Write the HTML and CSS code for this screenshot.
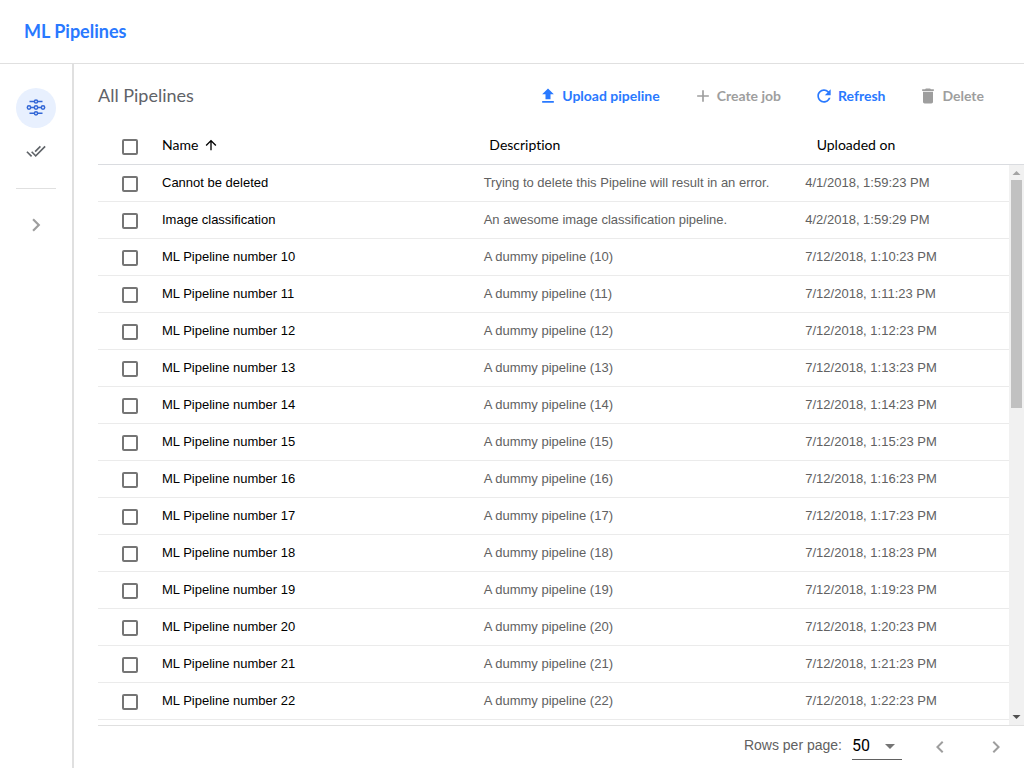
FILE: index.html
```html
<!DOCTYPE html>
<html lang="en">
<head>
<meta charset="utf-8">
<title>ML Pipelines</title>
<link rel="stylesheet" href="styles.css">
</head>
<body>
<header class="topbar"><h1 class="brand">ML Pipelines</h1></header>
<div class="layout">
  <nav class="sidebar" aria-label="Main">
    <a class="nav-item active" href="#pipelines" aria-label="Pipelines">
      <svg width="20" height="20" viewBox="0 0 20 20" fill="none" stroke="currentColor" stroke-width="1.5">
        <path d="M3.500 3.500H8M12 3.500h4.500M5 9.500h3M12 9.500h3M3.500 15.300H8M12 15.300h4.500"/>
        <circle cx="10" cy="3.500" r="1.600"/><circle cx="3" cy="9.500" r="1.700"/><circle cx="10" cy="9.500" r="1.700"/><circle cx="17" cy="9.500" r="1.700"/><circle cx="10" cy="15.300" r="1.600"/>
      </svg>
    </a>
    <a class="nav-item" href="#jobs" aria-label="Jobs">
      <svg width="20" height="20" viewBox="0 1 24 24" fill="currentColor"><path d="M18 7l-1.410-1.410-6.340 6.340 1.410 1.410L18 7zm4.240-1.410L11.660 16.170 7.480 12l-1.410 1.410L11.660 19l12-12-1.420-1.410zM.41 13.410L6 19l1.410-1.410L1.830 12 .41 13.410z"/></svg>
    </a>
    <hr class="divider">
    <button class="expand" type="button" aria-label="Expand"><svg width="26" height="26" viewBox="0 0 24 24" fill="currentColor"><path d="M10 6L8.590 7.410 13.170 12l-4.580 4.590L10 18l6-6z"/></svg></button>
  </nav>
  <main class="content">
    <div class="toolbar">
      <h2 class="page-title">All Pipelines</h2>
      <div class="actions">
        <button class="action" type="button"><svg width="20" height="20" viewBox="0 0 24 24" fill="currentColor"><path d="M9 16h6v-6h4l-7-7-7 7h4zm-4 2h14v2H5z"/></svg>Upload pipeline</button>
        <button class="action" type="button" disabled><svg width="20" height="20" viewBox="0 0 24 24" fill="currentColor"><path d="M19 13h-6v6h-2v-6H5v-2h6V5h2v6h6v2z"/></svg>Create job</button>
        <button class="action" type="button"><svg width="20" height="20" viewBox="0 0 24 24" fill="currentColor"><path d="M17.650 6.350C16.200 4.900 14.210 4 12 4c-4.420 0-7.990 3.580-7.990 8s3.570 8 7.990 8c3.730 0 6.840-2.550 7.730-6h-2.080c-.82 2.330-3.040 4-5.650 4-3.310 0-6-2.690-6-6s2.690-6 6-6c1.660 0 3.140.69 4.220 1.780L13 11h7V4l-2.350 2.350z"/></svg>Refresh</button>
        <button class="action" type="button" disabled><svg width="20" height="20" viewBox="0 0 24 24" fill="currentColor"><path d="M6 19c0 1.100.9 2 2 2h8c1.100 0 2-.9 2-2V7H6v12zM19 4h-3.500l-1-1h-5l-1 1H5v2h14V4z"/></svg>Delete</button>
      </div>
    </div>
    <table class="grid">
      <thead><tr class="row head"><th><input type="checkbox" aria-label="Select all"></th><th>Name <svg width="16" height="16" viewBox="0 0 24 24" fill="currentColor"><path d="M4 12l1.410 1.410L11 7.830V20h2V7.830l5.580 5.590L20 12l-8-8-8 8z"/></svg></th><th>Description</th><th>Uploaded on</th></tr></thead>
      <tbody class="rows">
        <tr class="row"><td><input type="checkbox" aria-label="Select Cannot be deleted"></td><td>Cannot be deleted</td><td>Trying to delete this Pipeline will result in an error.</td><td>4/1/2018, 1:59:23 PM</td></tr>
        <tr class="row"><td><input type="checkbox" aria-label="Select Image classification"></td><td>Image classification</td><td>An awesome image classification pipeline.</td><td>4/2/2018, 1:59:29 PM</td></tr>
        <tr class="row"><td><input type="checkbox" aria-label="Select 10"></td><td>ML Pipeline number 10</td><td>A dummy pipeline (10)</td><td>7/12/2018, 1:10:23 PM</td></tr>
        <tr class="row"><td><input type="checkbox" aria-label="Select 11"></td><td>ML Pipeline number 11</td><td>A dummy pipeline (11)</td><td>7/12/2018, 1:11:23 PM</td></tr>
        <tr class="row"><td><input type="checkbox" aria-label="Select 12"></td><td>ML Pipeline number 12</td><td>A dummy pipeline (12)</td><td>7/12/2018, 1:12:23 PM</td></tr>
        <tr class="row"><td><input type="checkbox" aria-label="Select 13"></td><td>ML Pipeline number 13</td><td>A dummy pipeline (13)</td><td>7/12/2018, 1:13:23 PM</td></tr>
        <tr class="row"><td><input type="checkbox" aria-label="Select 14"></td><td>ML Pipeline number 14</td><td>A dummy pipeline (14)</td><td>7/12/2018, 1:14:23 PM</td></tr>
        <tr class="row"><td><input type="checkbox" aria-label="Select 15"></td><td>ML Pipeline number 15</td><td>A dummy pipeline (15)</td><td>7/12/2018, 1:15:23 PM</td></tr>
        <tr class="row"><td><input type="checkbox" aria-label="Select 16"></td><td>ML Pipeline number 16</td><td>A dummy pipeline (16)</td><td>7/12/2018, 1:16:23 PM</td></tr>
        <tr class="row"><td><input type="checkbox" aria-label="Select 17"></td><td>ML Pipeline number 17</td><td>A dummy pipeline (17)</td><td>7/12/2018, 1:17:23 PM</td></tr>
        <tr class="row"><td><input type="checkbox" aria-label="Select 18"></td><td>ML Pipeline number 18</td><td>A dummy pipeline (18)</td><td>7/12/2018, 1:18:23 PM</td></tr>
        <tr class="row"><td><input type="checkbox" aria-label="Select 19"></td><td>ML Pipeline number 19</td><td>A dummy pipeline (19)</td><td>7/12/2018, 1:19:23 PM</td></tr>
        <tr class="row"><td><input type="checkbox" aria-label="Select 20"></td><td>ML Pipeline number 20</td><td>A dummy pipeline (20)</td><td>7/12/2018, 1:20:23 PM</td></tr>
        <tr class="row"><td><input type="checkbox" aria-label="Select 21"></td><td>ML Pipeline number 21</td><td>A dummy pipeline (21)</td><td>7/12/2018, 1:21:23 PM</td></tr>
        <tr class="row"><td><input type="checkbox" aria-label="Select 22"></td><td>ML Pipeline number 22</td><td>A dummy pipeline (22)</td><td>7/12/2018, 1:22:23 PM</td></tr>
      </tbody>
    </table>
    <div class="scrollbar" aria-hidden="true">
      <svg class="arrow up" width="15" height="15" viewBox="0 0 15 15" fill="currentColor"><path d="M3.500 10l4-4 4 4z"/></svg>
      <div class="track"><div class="thumb"></div></div>
      <svg class="arrow down" width="15" height="15" viewBox="0 0 15 15" fill="currentColor"><path d="M3.500 5l4 4 4-4z"/></svg>
    </div>
    <footer class="pager">
      <label for="page-size">Rows per page:</label>
      <span class="select-box">
        <select id="page-size"><option>50</option></select>
        <svg width="24" height="24" viewBox="0 0 24 24" fill="currentColor"><path d="M7 10l5 5 5-5z"/></svg>
      </span>
      <button class="page" type="button" aria-label="Previous page" disabled><svg width="24" height="24" viewBox="0 0 24 24" fill="currentColor"><path d="M15.410 7.410L14 6l-6 6 6 6 1.410-1.410L10.830 12z"/></svg></button>
      <button class="page" type="button" aria-label="Next page"><svg width="24" height="24" viewBox="0 0 24 24" fill="currentColor"><path d="M10 6L8.590 7.410 13.170 12l-4.580 4.590L10 18l6-6z"/></svg></button>
    </footer>
  </main>
</div>
</body>
</html>
```
FILE: styles.css
```css
* { box-sizing: border-box; }
body {
  margin: 0;
  height: 100vh;
  display: flex;
  flex-direction: column;
  background: #fff;
  color: #000;
  font: 13px/16px "Liberation Sans", Arial, sans-serif;
}
svg { display: block; flex: none; }
button {
  display: flex;
  align-items: center;
  justify-content: center;
  padding: 0;
  border: 0;
  background: none;
  font: inherit;
  color: #9e9e9e;
}
.topbar {
  flex: none;
  height: 64px;
  padding: 0 24px 2px;
  display: flex;
  align-items: center;
  border-bottom: 1px solid #e0e0e0;
}
.brand { margin: 0; font: 700 18px/24px Lato, sans-serif; color: #2979ff; }
.layout { flex: 1; min-height: 0; display: flex; }
.sidebar {
  flex: none;
  width: 74px;
  padding: 24px 16px;
  border-right: 2px solid #e0e0e0;
  display: flex;
  flex-direction: column;
}
.nav-item {
  display: flex;
  align-items: center;
  justify-content: center;
  width: 40px;
  height: 40px;
  margin-bottom: 4px;
  border-radius: 50%;
  color: #5f6368;
}
.nav-item.active { background: #e8f0fe; color: #3367d6; }
.divider { width: 100%; margin: 12px 0 16px; border: 0; border-top: 1px solid #e0e0e0; }
.expand { width: 40px; height: 40px; }
.content {
  flex: 1;
  min-width: 0;
  padding-left: 24px;
  display: grid;
  grid-template: 64px 37px minmax(0, 1fr) 43px / minmax(0, 1fr) 15px;
}
.toolbar {
  grid-column: 1 / -1;
  display: flex;
  align-items: center;
  justify-content: space-between;
  padding-right: 40px;
}
.page-title { margin: 0; padding-bottom: 2px; font: 400 18px/24px Lato, sans-serif; color: #5f6368; }
.actions { display: flex; gap: 33px; }
.action { gap: 4px; font: 700 14px/20px Lato, sans-serif; font-variant-ligatures: none; color: #2979ff; }
.action:disabled { color: #9e9e9e; }
.grid, .grid thead { display: contents; }
.row {
  display: grid;
  grid-template-columns: 64px 30fr 30fr 19fr;
  height: 37px;
  border-bottom: 1px solid #ebebeb;
}
.row th, .row td { display: flex; align-items: center; padding: 0; white-space: nowrap; color: #616161; }
.row td:nth-child(2) { color: #000; }
.row.head { grid-column: 1 / -1; border-color: #dadce0; }
.row.head th { gap: 5px; padding-bottom: 2px; font: 400 14px/20px Lato, sans-serif; font-variant-ligatures: none; color: #000; }
.row th:first-child, .row td:first-child { justify-content: center; padding-top: 2px; }
.row.head th:first-child { padding-bottom: 0; }
.rows { display: block; overflow: hidden; }
input[type="checkbox"] {
  appearance: none;
  width: 16px;
  height: 16px;
  margin: 0;
  border: 2px solid #757575;
  border-radius: 2px;
}
.scrollbar { display: flex; flex-direction: column; background: #f1f1f1; }
.arrow.up { color: #a3a3a3; }
.arrow.down { color: #505050; }
.track { flex: 1; padding: 0 2px; }
.thumb { height: 43%; background: #c1c1c1; }
.pager {
  grid-column: 1 / -1;
  display: flex;
  align-items: center;
  justify-content: flex-end;
  padding-right: 16px;
  border-top: 1px solid #e0e0e0;
  font-size: 14px;
  color: #616161;
}
.pager label { padding-bottom: 4px; }
.select-box {
  display: grid;
  grid-template-columns: 1fr 24px;
  align-items: center;
  width: 50px;
  margin: 0 26px 2px 10px;
  border-bottom: 1px solid #616161;
}
.select-box select {
  grid-area: 1 / 1 / 2 / 3;
  appearance: none;
  height: 27px;
  padding: 0;
  border: 0;
  background: none;
  font: 16px/24px Roboto, sans-serif;
  color: #000;
}
.select-box svg { grid-area: 1 / 2; color: #757575; pointer-events: none; }
.page { width: 24px; height: 24px; }
.page + .page { margin-left: 32px; }
```
